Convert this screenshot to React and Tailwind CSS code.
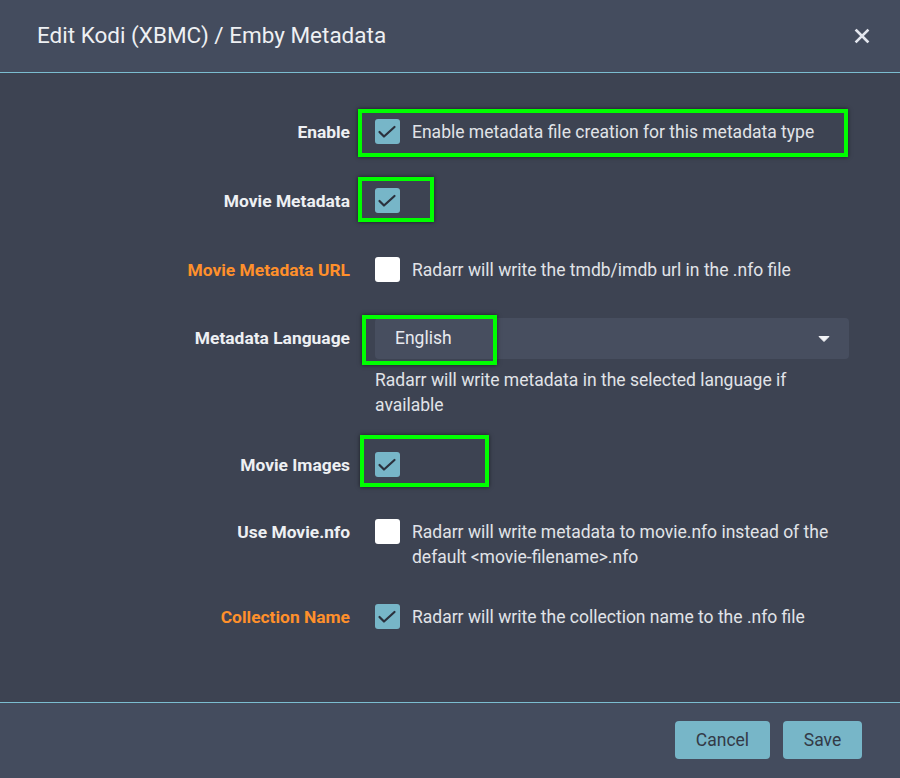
import React from "react";

function Check() {
  return (
    <svg width="25" height="25" viewBox="0 0 25 25" className="block">
      <polyline points="4.5,13 9,17.5 19.5,8" fill="none" stroke="#2b313d" strokeWidth="2.2" strokeLinecap="round" strokeLinejoin="round" />
    </svg>
  );
}

function Box({ checked }) {
  return checked ? (
    <div className="w-[25px] h-[25px] -mt-px rounded-[3px] bg-[#77b6c8] shrink-0">
      <Check />
    </div>
  ) : (
    <div className="w-[25px] h-[25px] -mt-px rounded-[3px] bg-white shrink-0" />
  );
}

function Label({ children, orange }) {
  return (
    <div
      className={`w-[350px] shrink-0 text-right font-bold text-[17.4px] leading-[25px] ${
        orange ? "text-[#ff902b]" : "text-[#eef0f3]"
      }`}
    >
      {children}
    </div>
  );
}

function CheckRow({ label, orange, checked, text, className }) {
  return (
    <div className={`flex items-start ${className}`}>
      <Label orange={orange}>{label}</Label>
      <div className="flex items-start ml-[25px] gap-[12px]">
        <Box checked={checked} />
        {text && <div className="text-[17.5px] leading-[25px] text-[#e1e3e8] w-[430px]">{text}</div>}
      </div>
    </div>
  );
}

export default function App() {
  return (
    <div
      className="relative w-[900px] h-[778px] flex flex-col bg-[#3d4352] overflow-hidden"
      style={{ fontFamily: "Roboto, 'Liberation Sans', sans-serif" }}
    >
      <div className="h-[72px] bg-[#444c5e] border-b border-[#7bbdd0] flex items-center justify-between pl-[37px] pr-[30px] shrink-0 box-content">
        <div className="text-[22.5px] text-[#eef0f3]">Edit Kodi (XBMC) / Emby Metadata</div>
        <svg width="16" height="16" viewBox="0 0 16 16">
          <path d="M2.5 2.5 L13.5 13.5 M13.5 2.5 L2.5 13.5" stroke="#e3e6ee" strokeWidth="2.6" strokeLinecap="square" />
        </svg>
      </div>

      <div className="flex-1 pt-[47px]">
        <CheckRow label="Enable" checked text="Enable metadata file creation for this metadata type" className="mb-[44px]" />
        <CheckRow label="Movie Metadata" checked className="mb-[44px]" />
        <CheckRow label="Movie Metadata URL" orange text="Radarr will write the tmdb/imdb url in the .nfo file" className="mb-[35px]" />

        <div className="flex items-start mb-[35px]">
          <div className="h-[41px] flex items-center">
            <Label>Metadata Language</Label>
          </div>
          <div className="ml-[25px] w-[474px]">
            <div className="h-[41px] rounded-[4px] bg-[#474e5f] flex items-center justify-between pl-[20px] pr-[19px]">
              <span className="text-[17.5px] text-[#e8eaef]">English</span>
              <svg width="12" height="8" viewBox="0 0 12 8">
                <path d="M1 1.5 L11 1.5 L6 6.5 Z" fill="#f2f3f6" stroke="#f2f3f6" strokeWidth="1" strokeLinejoin="round" />
              </svg>
            </div>
            <div className="mt-[9px] text-[17.5px] leading-[25px] text-[#e1e3e8] w-[440px]">
              Radarr will write metadata in the selected language if available
            </div>
          </div>
        </div>

        <CheckRow label="Movie Images" checked className="mb-[42px]" />
        <CheckRow
          label="Use Movie.nfo"
          text="Radarr will write metadata to movie.nfo instead of the default <movie-filename>.nfo"
          className="mb-[35px]"
        />
        <CheckRow label="Collection Name" orange checked text="Radarr will write the collection name to the .nfo file" />
      </div>

      <div className="h-[76px] bg-[#444c5e] border-t border-[#7bbdd0] flex items-start justify-end gap-[13px] pt-[18px] pr-[38px] shrink-0 box-border">
        <button className="h-[38px] w-[95px] rounded-[4px] bg-[#77b6c8] text-[17.5px] text-[#333a47]">Cancel</button>
        <button className="h-[38px] w-[79px] rounded-[4px] bg-[#77b6c8] text-[17.5px] text-[#333a47]">Save</button>
      </div>

      <div className="absolute left-[358px] top-[109px] w-[490px] h-[48px] border-[4px] border-[#00ff00] shadow-[0_0_4px_rgba(0,0,0,0.6)]" />
      <div className="absolute left-[358px] top-[177px] w-[76px] h-[45px] border-[4px] border-[#00ff00] shadow-[0_0_4px_rgba(0,0,0,0.6)]" />
      <div className="absolute left-[362px] top-[315px] w-[135px] h-[50px] border-[4px] border-[#00ff00] shadow-[0_0_4px_rgba(0,0,0,0.6)]" />
      <div className="absolute left-[360px] top-[435px] w-[129px] h-[52px] border-[4px] border-[#00ff00] shadow-[0_0_4px_rgba(0,0,0,0.6)]" />
    </div>
  );
}
